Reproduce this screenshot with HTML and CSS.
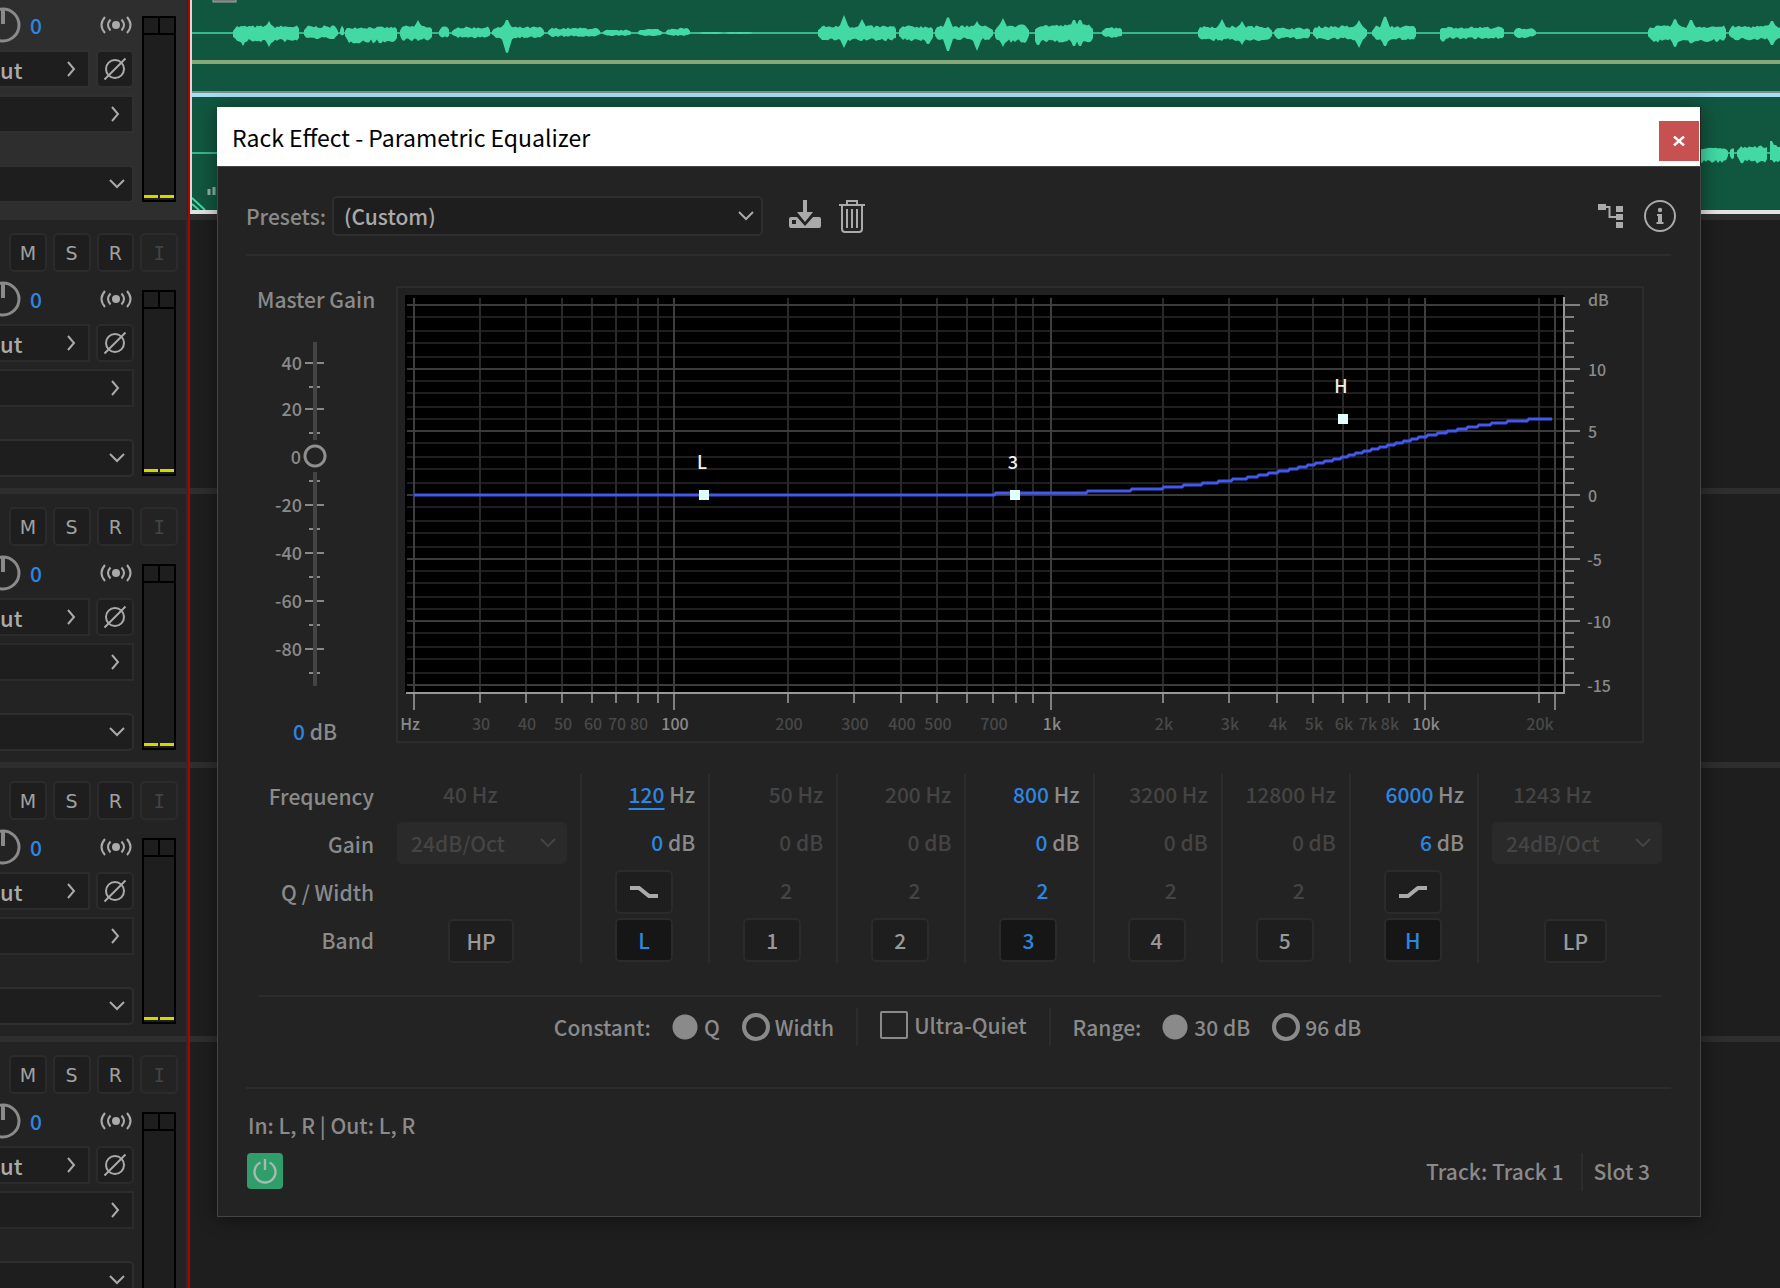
FILE: index.html
```html
<!DOCTYPE html>
<html lang="en">
<head>
<meta charset="utf-8">
<title>Parametric Equalizer</title>
<link rel="stylesheet" href="styles.css">
</head>
<body>
<svg class="defs" aria-hidden="true">
  <symbol id="chev-down" viewBox="0 0 18 18"><path d="M2 5l7 7 7-7" fill="none" stroke="currentColor" stroke-width="2"/></symbol>
  <symbol id="chev-right" viewBox="0 0 18 18"><path d="M6 2l6 7-6 7" fill="none" stroke="currentColor" stroke-width="2"/></symbol>
  <symbol id="knob" viewBox="0 0 38 38"><circle cx="19" cy="19" r="16" fill="none" stroke="currentColor" stroke-width="3"/><path d="M19 3v15" stroke="currentColor" stroke-width="4"/></symbol>
  <symbol id="mono" viewBox="0 0 32 20"><circle cx="16" cy="10" r="4" fill="currentColor"/><path d="M10.500 4.500q-5 5.500 0 11M21.500 4.500q5 5.500 0 11M5 2q-7 8 0 16M27 2q7 8 0 16" fill="none" stroke="currentColor" stroke-width="2"/></symbol>
  <symbol id="phase" viewBox="0 0 24 24"><circle cx="12" cy="12" r="9" fill="none" stroke="currentColor" stroke-width="2"/><path d="M1.500 22.500L22.500 1.500" stroke="currentColor" stroke-width="2"/></symbol>
</svg>

<main class="app">
  <section class="mixer" id="mixer" aria-label="Track controls"></section>
  <div class="playhead"></div>
  <section class="timeline" aria-label="Timeline">
    <div class="lane">
      <div class="clip">
        <svg class="wave" id="wave"></svg>
      </div>
    </div>
    <div class="lane"></div>
    <div class="lane"></div>
    <div class="lane"></div>
    <div class="lane"></div>
  </section>
</main>

<template id="strip">
  <article class="strip">
    <div class="toggles">
      <button type="button">M</button><button type="button">S</button><button type="button">R</button><button type="button" class="monitor" disabled>I</button>
    </div>
    <div class="controls">
      <div class="pan">
        <svg class="knob"><use href="#knob"/></svg><span class="hot">0</span>
        <svg class="mono"><use href="#mono"/></svg>
      </div>
      <div class="route">
        <button type="button" class="flyout"><span>ut</span><svg class="chev"><use href="#chev-right"/></svg></button>
        <button type="button" class="phase" aria-label="Phase"><svg><use href="#phase"/></svg></button>
      </div>
      <button type="button" class="flyout" aria-label="Output"><span></span><svg class="chev"><use href="#chev-right"/></svg></button>
      <div class="pick automation"><select aria-label="Automation mode"><option></option></select><svg class="chev"><use href="#chev-down"/></svg></div>
    </div>
    <div class="meter"><i></i><i></i><b></b><b></b></div>
  </article>
</template>

<section class="dialog" role="dialog" aria-labelledby="dlg-title">
  <header class="titlebar">
    <h1 id="dlg-title">Rack Effect - Parametric Equalizer</h1>
    <button type="button" class="close" aria-label="Close"><svg viewBox="0 0 12 10"><path d="M1 0.500l10 9M11 0.500l-10 9" stroke="#fff" stroke-width="2.400"/></svg></button>
  </header>
  <div class="panel">
    <div class="toolbar">
      <label for="preset">Presets:</label>
      <div class="pick preset"><select id="preset"><option>(Custom)</option></select><svg class="chev"><use href="#chev-down"/></svg></div>
      <button type="button" class="icon" aria-label="Save preset"><svg width="32" height="32" viewBox="0 0 32 32"><path d="M14 0h4v12h6l-8 10-8-10h6z" fill="#aaa"/><path fill-rule="evenodd" d="M2 17h6l8 9 8-9h6q2 0 2 2v7q0 2-2 2H2q-2 0-2-2v-7q0-2 2-2zM3 20v4h4v-4z" fill="#aaa"/></svg></button>
      <button type="button" class="icon" aria-label="Delete preset"><svg width="26" height="34" viewBox="0 0 26 34"><g fill="none" stroke="#aaa" stroke-width="2"><path d="M0 6h26M8 6V2h10v4M3 6v24q0 3 3 3h14q3 0 3-3V6M8 10v19M13 10v19M18 10v19"/></g></svg></button>
      <span class="spacer"></span>
      <button type="button" class="icon" aria-label="Channel routing"><svg width="26" height="26" viewBox="0 0 26 26"><path d="M0 1h8v6H0zM18 3h7v6h-7zM18 11h7v6h-7zM18 19h7v6h-7z" fill="#aaa"/><path d="M8 4h3.500v10H18" fill="none" stroke="#aaa" stroke-width="2"/></svg></button>
      <button type="button" class="icon" aria-label="Info"><svg width="34" height="34" viewBox="0 0 34 34"><circle cx="17" cy="17" r="15" fill="none" stroke="#aaa" stroke-width="2"/><circle cx="17" cy="11" r="2.200" fill="#aaa"/><path d="M14 15h5v8h1.500v2h-7v-2H15v-6h-1z" fill="#aaa"/></svg></button>
    </div>
    <hr>

    <div class="eq">
      <div class="gain">
        <label for="master">Master Gain</label>
        <div class="fader">
          <svg class="scale" id="scale" width="82" height="344" viewBox="0 0 82 344" aria-hidden="true"></svg>
          <input id="master" type="range" min="-96" max="44" value="0">
        </div>
        <p><span class="hot">0</span> dB</p>
      </div>
      <svg class="graph" id="graph" viewBox="396 286 1248 457" role="img" aria-label="Frequency response"></svg>
    </div>

    <div class="bands">
      <div class="names"><span>Frequency</span><span>Gain</span><span>Q / Width</span><span>Band</span></div>
      <div class="pass hp">
        <span class="value">40 Hz</span>
        <div class="pick slope"><select disabled aria-label="High-pass slope"><option>24dB/Oct</option></select><svg class="chev"><use href="#chev-down"/></svg></div>
        <button type="button">HP</button>
      </div>
      <div class="band on">
        <span class="value"><u>120</u> Hz</span><span class="value"><b>0</b> dB</span>
        <button type="button" class="shape" aria-label="Low shelf slope"><svg width="28" height="14" viewBox="0 0 28 14"><path d="M0 3h9l10 8h9" fill="none" stroke="#aaa" stroke-width="4"/></svg></button>
        <button type="button">L</button>
      </div>
      <div class="band"><span class="value">50 Hz</span><span class="value">0 dB</span><span class="value q">2</span><button type="button">1</button></div>
      <div class="band"><span class="value">200 Hz</span><span class="value">0 dB</span><span class="value q">2</span><button type="button">2</button></div>
      <div class="band on"><span class="value"><b>800</b> Hz</span><span class="value"><b>0</b> dB</span><span class="value q"><b>2</b></span><button type="button">3</button></div>
      <div class="band"><span class="value">3200 Hz</span><span class="value">0 dB</span><span class="value q">2</span><button type="button">4</button></div>
      <div class="band"><span class="value">12800 Hz</span><span class="value">0 dB</span><span class="value q">2</span><button type="button">5</button></div>
      <div class="band on">
        <span class="value"><b>6000</b> Hz</span><span class="value"><b>6</b> dB</span>
        <button type="button" class="shape" aria-label="High shelf slope"><svg width="28" height="14" viewBox="0 0 28 14"><path d="M0 11h9l10-8h9" fill="none" stroke="#aaa" stroke-width="4"/></svg></button>
        <button type="button">H</button>
      </div>
      <div class="pass lp">
        <span class="value">1243 Hz</span>
        <div class="pick slope"><select disabled aria-label="Low-pass slope"><option>24dB/Oct</option></select><svg class="chev"><use href="#chev-down"/></svg></div>
        <button type="button">LP</button>
      </div>
    </div>
    <hr class="inset">

    <div class="options">
      <fieldset>
        <span class="legend">Constant:</span>
        <label><input type="radio" name="constant" checked>Q</label>
        <label><input type="radio" name="constant">Width</label>
      </fieldset>
      <label class="quiet"><input type="checkbox">Ultra-Quiet</label>
      <fieldset>
        <span class="legend">Range:</span>
        <label><input type="radio" name="range" checked>30 dB</label>
        <label><input type="radio" name="range">96 dB</label>
      </fieldset>
    </div>
    <hr>

    <p class="io">In: L, R | Out: L, R</p>
    <footer class="status">
      <button type="button" class="power" aria-label="Power"><svg width="26" height="26" viewBox="0 0 26 26"><path d="M8.500 4.500a10.500 10.500 0 1 0 9 0M13 1v11" fill="none" stroke="#a9b9b0" stroke-width="2.400"/></svg></button>
      <span class="where">Track: Track 1</span>
      <span class="slot">Slot 3</span>
    </footer>
  </div>
</section>
<script src="app.js"></script>
</body>
</html>
```
FILE: styles.css
```css
* { box-sizing: border-box; }
body {
  margin: 0;
  height: 100vh;
  overflow: hidden;
  position: relative;
  background: #1e1e1e;
  color: #8a8a8a;
  font: 500 21px/24px "Noto Sans CJK SC", "Noto Sans", sans-serif;
}
button, input, select { font: inherit; color: inherit; margin: 0; padding: 0; }
button { display: flex; align-items: center; justify-content: center; border: 2px solid #2b2b2b; border-radius: 5px; background: #1e1e1e; }
p, h1 { margin: 0; font: inherit; }
hr { margin: 0; border: 0; height: 2px; background: #2c2c2c; }
.defs { display: none; }
.hot { color: #2d86e0; }
.chev { width: 18px; height: 18px; color: #aaa; flex: none; }

/* Drop-downs */
.pick { display: grid; align-items: center; }
.pick > * { grid-area: 1 / 1; }
.pick select { appearance: none; width: 100%; height: 100%; border: 2px solid #2e2e2e; border-radius: 5px; background: #1e1e1e; color: #aaa; padding: 0 10px; opacity: 1; }
.pick .chev { justify-self: end; margin-right: 8px; pointer-events: none; }

/* Workspace */
.app { display: grid; grid-template-columns: 188px 2px 1fr; margin-top: -54px; }
.mixer { overflow: hidden; background: #232323; }
.playhead { background: #b00000; }
.lane { height: 274px; border-bottom: 6px solid #2e2e2e; }
.clip { height: 268px; padding-top: 54px; background: #11573f; border-left: 2px solid #d9d9d9; border-bottom: 4px solid #e2e2e2; }
.wave { display: block; width: 100%; height: 210px; }

.strip { height: 274px; margin-left: -20px; padding: 13px 10px 0 29px; border-bottom: 6px solid #2e2e2e; border-right: 2px solid #2b2b2b; display: grid; grid-template: 39px 1fr / 1fr 34px; column-gap: 8px; row-gap: 18px; }
.strip.selected { background: #2e2e2e; }
.toggles { grid-column: 1 / 3; display: flex; gap: 6px; margin-right: -2px; }
.toggles button { width: 38px; height: 39px; font: 19px "DejaVu Sans", sans-serif; color: #a0a0a0; }
.toggles .monitor { font-family: "DejaVu Sans Mono", monospace; color: #444; background: none; }
.controls { margin-left: -29px; display: flex; flex-direction: column; }
.pan { display: flex; align-items: center; height: 38px; margin: -10px 2px 6px 4px; }
.pan .knob { width: 38px; height: 38px; color: #8a8a8a; margin-right: 8px; }
.pan .mono { width: 32px; height: 20px; margin-left: auto; color: #aaa; }
.route { display: flex; justify-content: space-between; margin-bottom: 7px; }
.flyout { width: 100%; height: 38px; border-radius: 0; justify-content: space-between; padding: 0 8px; color: #aaa; }
.route .flyout { width: 110px; padding: 0 8px 0 18px; font-size: 22px; }
.phase { width: 38px; height: 38px; color: #aaa; }
.phase svg { width: 24px; height: 24px; }
.automation { height: 38px; margin-top: 32px; }
.selected .flyout, .selected .phase, .selected select { border-color: #303030; }
.meter { height: 186px; background: #1e1e1e; border: 2px solid #000; display: grid; grid-template: 17px 160px 3px / 1fr 1fr; column-gap: 2px; }
.meter i { border-bottom: 2px solid #000; box-shadow: 2px 0 #000; }
.meter i + i { box-shadow: none; }
.meter b { grid-row: 3; background: #d6d600; }

/* Effect window */
.dialog { position: absolute; left: 217px; right: 79px; top: 107px; background: #232323; box-shadow: 0 2px 18px rgba(0, 0, 0, .45); }
.titlebar { display: flex; justify-content: space-between; align-items: center; height: 59px; padding: 0 1px 0 15px; margin-right: 1px; background: #fff; color: #000; }
.titlebar h1 { font-size: 23px; font-weight: 400; }
.close { width: 40px; height: 40px; margin-top: 9px; border: 0; border-radius: 0; background: #c75050; }
.close svg { width: 12px; height: 10px; }
.panel { border: 1px solid #444; padding: 29px 29px 23px 28px; }
.toolbar { display: flex; align-items: center; height: 40px; margin-bottom: 18px; }
.preset { width: 431px; height: 40px; margin: 0 26px 0 6px; }
.icon { border: 0; background: none; }
.icon + .icon { margin-left: 18px; }
.spacer { flex: 1; }
.toolbar .spacer ~ .icon:last-child { margin: 0 -6px 0 19px; }

.eq { display: grid; grid-template-columns: 150px 1fr; margin: 30px 27px 31px 0; }
.gain { display: flex; flex-direction: column; align-items: flex-start; }
.gain label { margin: 1px 0 0 11px; }
.fader { display: grid; margin: 31px 0 33px -1px; }
.fader > * { grid-area: 1 / 1; }
.fader input {
  appearance: none; justify-self: end; width: 24px; height: 344px; background: none;
  writing-mode: vertical-lr; direction: rtl;
}
.fader input::-webkit-slider-runnable-track { width: 24px; height: 344px; background: linear-gradient(#444, #444) center / 4px 100% no-repeat; }
.fader input::-webkit-slider-thumb { appearance: none; width: 24px; height: 32px; border: 0; background: radial-gradient(circle closest-side, #232323 0 8px, #8f8f8f 9px 11px, #232323 12px); }
.gain p { margin-left: 47px; }
.graph { display: block; width: 100%; height: auto; }
.graph text { font-size: 16px; fill: #8a8a8a; }
.graph .minor { fill: #484848; }
.graph .bottom { text-anchor: middle; }
.graph .node { font-size: 18px; fill: #f0f0f0; text-anchor: middle; }
.scale text { font-size: 18px; fill: #8a8a8a; text-anchor: end; }

/* Band table */
.bands { display: grid; grid-template-columns: 150px 184px repeat(7, 1fr) 186px; height: 189px; margin: 0 8px 32px 0; }
.bands > * { display: grid; grid-template-rows: repeat(4, 44px); row-gap: 4px; align-items: center; }
.names { justify-items: end; padding-right: 22px; }
.band, .lp { border-left: 2px solid #2c2c2c; }
.value { color: #444; padding-bottom: 4px; text-align: right; white-space: nowrap; }
.band .value { padding-right: 13px; }
.band .q { padding-right: 44px; }
.on .value { color: #8a8a8a; }
.on b, .on u { font-weight: inherit; color: #2d86e0; }
.on u { text-underline-offset: 5px; text-decoration-thickness: 2px; }
.band button { width: 58px; height: 44px; margin-left: 33px; color: #999; }
.on button:last-child { background: #161616; color: #2d86e0; }
.pass .value { text-align: left; padding-left: 47px; }
.pass button { grid-row: 4; width: 66px; height: 44px; margin: 2px 0 0 52px; color: #999; }
.pass .slope { width: 170px; height: 42px; align-self: start; margin-left: 1px; }
.slope select { border-color: #2a2a2a; background: #2a2a2a; color: #444; padding-left: 12px; }
.slope .chev { color: #444; margin-right: 10px; }
.pass.lp .slope { margin-left: 13px; }
.pass.lp .value { padding-left: 34px; }
.pass.lp button { width: 63px; margin-left: 65px; }

.inset { margin: 0 9px 0 12px; }
.options { display: flex; justify-content: center; height: 38px; margin: 11px 2px 41px 0; }
.options fieldset { display: flex; align-items: center; border: 0; margin: 0; padding: 0; }
.options label { display: flex; align-items: center; }
.options input { appearance: none; width: 28px; height: 28px; margin: 0 5px 0 0; border: 4px solid #8a8a8a; border-radius: 50%; }
.options input:checked { border: 0; background: radial-gradient(circle closest-side, #8a8a8a 0 12px, transparent 13px); }
.legend { margin-right: 20px; }
.options label + label { margin-left: 22px; }
.quiet { margin: 0 22px; padding: 0 22px 4px; border: solid #2c2c2c; border-width: 0 2px; }
.options .quiet input { border-width: 2px; border-radius: 2px; margin-right: 6px; }

.io { margin: 24px 0 16px 2px; }
.status { display: flex; align-items: flex-start; height: 40px; }
.power { width: 36px; height: 36px; margin-left: 1px; border: 0; background: #2f9e6b; border-radius: 4px; }
.where, .slot { height: 38px; padding-top: 6px; }
.where { margin-left: auto; padding-right: 17px; border-right: 2px solid #2c2c2c; }
.slot { padding-left: 11px; margin-right: 21px; }
```
FILE: app.js
```js
const NS = 'http://www.w3.org/2000/svg';
function add(parent, tag, attrs, text) {
  const el = document.createElementNS(NS, tag);
  for (const k in attrs) el.setAttribute(k, attrs[k]);
  if (text !== undefined) el.textContent = text;
  parent.appendChild(el);
  return el;
}

const mixer = document.getElementById('mixer');
for (let i = 0; i < 5; i++) {
  const strip = document.getElementById('strip').content.cloneNode(true);
  if (i === 0) {
    strip.firstElementChild.classList.add('selected');
    strip.querySelector('.toggles').replaceChildren();
  }
  mixer.appendChild(strip);
}

// Waveforms: each burst is [start, end, up, down], each peak [x, up, down]
const wave = document.getElementById('wave');
let seed = 7;
const rnd = () => (seed = (seed * 16807) % 2147483647) / 2147483647;
function drawWave(cy, bursts, peaks) {
  let d = '';
  for (const [a, b, up, down] of bursts) {
    const top = [], bottom = [];
    for (let x = a; x <= b; x += 2) {
      const edge = Math.min(1, (x - a + 2) / 5, (b - x + 2) / 5);
      let u = up * edge * (0.7 + rnd() * 0.4), l = down * edge * (0.65 + rnd() * 0.4);
      for (const [px, pu, pd] of peaks) {
        const k = Math.max(0, 1 - Math.abs(x - px) / 7);
        u = Math.max(u, pu * k);
        l = Math.max(l, pd * k);
      }
      top.push(`${x} ${(cy - u).toFixed(1)}`);
      bottom.unshift(`${x} ${(cy + l).toFixed(1)}`);
    }
    d += 'M' + top.concat(bottom).join('L') + 'Z';
  }
  add(wave, 'path', { d: `M0 ${cy}H4000`, stroke: '#35b98a', 'stroke-width': 2 });
  add(wave, 'path', { d, fill: '#42d9a5' });
}
drawWave(33, [
  [41, 108, 7, 9], [112, 146, 7, 6], [148, 152, 10, 4], [153, 206, 6, 10], [208, 241, 7, 8], [247, 258, 6, 5], [260, 299, 6, 5],
  [300, 352, 6, 5], [356, 408, 5, 4], [411, 440, 3, 3], [446, 470, 4, 3], [474, 498, 5, 3], [508, 530, 1, 1], [534, 560, 1, 1],
  [626, 705, 7, 8], [707, 742, 7, 8], [743, 801, 7, 7], [803, 837, 8, 10], [843, 902, 8, 9], [910, 931, 6, 5],
  [1006, 1080, 7, 8], [1082, 1119, 5, 6], [1121, 1175, 7, 7], [1180, 1225, 7, 7], [1248, 1313, 6, 6], [1322, 1344, 5, 5],
  [1456, 1535, 7, 9], [1537, 1600, 7, 7]
], [
  [51, 5, 13], [77, 12, 14], [226, 13, 8], [315, 15, 23], [652, 18, 15], [670, 14, 8], [736, 6, 13], [756, 18, 21], [785, 12, 18],
  [811, 15, 14], [846, 6, 14], [882, 15, 15], [888, 15, 15], [1030, 14, 8], [1050, 12, 12], [1167, 13, 15], [1193, 19, 15], [1251, 6, 10],
  [1483, 16, 16], [1499, 15, 12], [1580, 14, 14]
]);
drawWave(153, [[1500, 1536, 5, 10], [1538, 1543, 7, 8], [1545, 1576, 7, 10], [1578, 1600, 8, 10]], [[1579, 14, 8]]);
add(wave, 'rect', { x: 0, y: 60, width: '100%', height: 4, fill: '#87a876' });
add(wave, 'rect', { x: 0, y: 91, width: '100%', height: 2, fill: '#74918c' });
add(wave, 'rect', { x: 0, y: 93, width: '100%', height: 4, fill: '#a5def5' });
add(wave, 'rect', { x: 21, y: -2, width: 23, height: 4, fill: '#777', stroke: '#a0a8a4' });
add(wave, 'path', { d: 'M17 195v-6M22 195v-8', stroke: '#8fb5a5', 'stroke-width': 3 });
add(wave, 'path', { d: 'M0 198l13 12M0 204l7 6', stroke: '#42d9a5', 'stroke-width': 2 });

// Master gain scale
const scale = document.getElementById('scale');
const major = [[21, '40'], [67, '20'], [115, '0'], [163, '-20'], [211, '-40'], [259, '-60'], [307, '-80']];
for (const [y, label] of major) {
  if (label !== '0') add(scale, 'path', { d: `M60 ${y}h19`, stroke: '#8a8a8a', 'stroke-width': 2 });
  add(scale, 'text', { x: label === '0' ? 56 : 57, y: y + 7 }, label);
}
for (const y of [45, 91, 139, 187, 235, 283, 331]) add(scale, 'path', { d: `M64 ${y}h11`, stroke: '#8a8a8a', 'stroke-width': 2 });

// Frequency response
const graph = document.getElementById('graph');
add(graph, 'rect', { x: 397, y: 287, width: 1246, height: 455, fill: '#212121', stroke: '#2c2c2c', 'stroke-width': 2 });
add(graph, 'rect', { x: 405, y: 295, width: 1159, height: 398, fill: '#000' });
const rows = [317, 331, 343, 357, 381, 393, 407, 419, 443, 457, 469, 483, 507, 521, 533, 547, 571, 583, 597, 609, 633, 647, 659, 673];
const bigRows = [[305, 'dB'], [369, '10'], [431, '5'], [495, '0'], [559, '-5'], [621, '-10'], [685, '-15']];
const cols = [[480, '30'], [526, '40'], [562, '50'], [592, '60'], [616, '70'], [638, '80'], [658, ''], [788, '200'], [854, '300'],
  [901, '400'], [937, '500'], [967, ''], [993, '700'], [1016, ''], [1033, ''], [1163, '2k'], [1229, '3k'], [1277, '4k'], [1313, '5k'],
  [1343, '6k'], [1367, '7k'], [1389, '8k'], [1409, ''], [1539, '20k']];
const bigCols = [[414, 'Hz'], [674, '100'], [1051, '1k'], [1425, '10k'], [1555, '']];
const line = (d, stroke, w = 2) => add(graph, 'path', { d, stroke, 'stroke-width': w, fill: 'none' });
line(rows.map(y => `M407 ${y}H1563`).join(''), '#1f1f1f');
line(cols.map(c => `M${c[0]} 298V692`).join(''), '#292929');
line(bigRows.map(r => `M407 ${r[0]}H1563`).join(''), '#3c3c3c');
line(bigCols.map(c => `M${c[0]} 298V692`).join(''), '#3e3e3e');
line('M406 693H1564V297', '#989898');
line(rows.map(y => `M1564 ${y}H1574`).join('') + bigRows.map(r => `M1564 ${r[0]}H1580`).join(''), '#808080');
line(cols.map(c => `M${c[0]} 694V703`).join('') + bigCols.map(c => `M${c[0]} 694V710`).join(''), '#808080');
for (const [y, t] of bigRows) add(graph, 'text', { x: t[0] === '-' ? 1587 : 1588, y: t === 'dB' ? 306 : y + 7 }, t);
for (const [x, t] of cols) add(graph, 'text', { x: x + 1, y: 730, class: 'bottom minor' }, t);
for (const [x, t] of bigCols) add(graph, 'text', { x: t === 'Hz' ? x - 4 : x + 1, y: 730, class: 'bottom' }, t);
const steps = [995, 1087, 1131, 1163, 1183, 1202, 1218, 1232, 1247, 1258, 1268, 1278, 1289, 1298, 1307, 1315, 1324, 1333, 1341, 1348,
  1355, 1363, 1371, 1379, 1387, 1395, 1403, 1411, 1418, 1427, 1437, 1447, 1457, 1467, 1478, 1491, 1507, 1528, 1553];
line('M414 495' + steps.map((x, i) => `H${x - 1}` + (i < steps.length - 1 ? `l2 -2` : '')).join(''), '#4259f0', 3);
for (const [x, y, t] of [[704, 495, 'L'], [1015, 495, '3'], [1343, 419, 'H']]) {
  add(graph, 'rect', { x: x - 5, y: y - 5, width: 10, height: 10, fill: '#e0ffff' });
  add(graph, 'text', { x: x - 2, y: y - 26, class: 'node' }, t);
}
```
